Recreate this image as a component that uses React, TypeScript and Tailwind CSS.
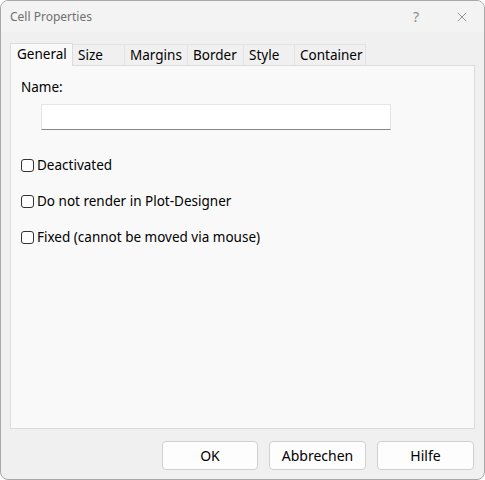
import { X } from "lucide-react";

const tabs = [
	{ label: "General", w: "w-[63px]" },
	{ label: "Size", w: "w-[52px]" },
	{ label: "Margins", w: "w-[63px]" },
	{ label: "Border", w: "w-[56px]" },
	{ label: "Style", w: "w-[51px]" },
	{ label: "Container", w: "w-[71px]" },
];

const checks = [
	"Deactivated",
	"Do not render in Plot-Designer",
	"Fixed (cannot be moved via mouse)",
];

const Checkbox: React.FC<{ label: string }> = ({ label }) => (
	<label className="flex items-center h-[20px] gap-[3px]">
		<span className="w-[13px] h-[13px] rounded-[3px] border border-[#333] bg-white" />
		<span>{label}</span>
	</label>
);

export default function App() {
	return (
		<div
			className="w-[485px] h-[480px] bg-[#f0f0f0] border border-[#a8a8a8] rounded-[8px] overflow-hidden flex flex-col text-[13.5px] text-black"
			style={{ fontFamily: '"Segoe UI", "Noto Sans", Arial, sans-serif' }}
		>
			{/* title bar */}
			<div className="h-[31px] shrink-0 bg-[#f3f3f3] flex items-center pl-[9px] pr-[14px] text-[12px] text-[#707070]">
				<span className="flex-1">Cell Properties</span>
				<span className="w-[40px] text-center text-[14px] text-[#888] mr-[18px]">?</span>
				<X size={16} strokeWidth={1} className="text-[#666]" />
			</div>

			<div className="flex-1 flex flex-col px-[9px] pt-[10px]">
				{/* tabs */}
				<div className="flex items-end h-[23px]">
					{tabs.map((t, i) =>
						i === 0 ? (
							<div
								key={t.label}
								className={`${t.w} h-[23px] bg-[#f9f9f9] border border-b-0 border-[#dcdcdc] pl-[6px] pt-[1px] leading-[19px] relative z-10 -mb-px`}
							>
								{t.label}
							</div>
						) : (
							<div
								key={t.label}
								className={`${t.w} h-[21px] bg-[#f0f0f0] border border-b-0 border-l-0 border-[#e3e3e3] pl-[5px] leading-[21px]`}
							>
								{t.label}
							</div>
						)
					)}
				</div>

				{/* panel */}
				<div className="w-[465px] h-[364px] bg-[#f9f9f9] border border-[#dcdcdc] pl-[10px] pt-[11px]">
					<div className="leading-[20px]">Name:</div>
					<div className="ml-[20px] mt-[7px] w-[350px] h-[26px] bg-white border border-[#e5e5e5] border-b-[#868686]" />
					<div className="mt-[25px] flex flex-col gap-[16px]">
						{checks.map((c) => (
							<Checkbox key={c} label={c} />
						))}
					</div>
				</div>

				{/* buttons */}
				<div className="flex justify-end gap-[11px] mt-[12px] pr-[1px]">
					{["OK", "Abbrechen", "Hilfe"].map((b, i) => (
						<button
							key={b}
							className={`${i === 0 ? "w-[96px]" : "w-[97px]"} h-[29px] bg-[#fdfdfd] border border-[#d0d0d0] rounded-[4px] text-[14px]`}
						>
							{b}
						</button>
					))}
				</div>
			</div>
		</div>
	);
}
